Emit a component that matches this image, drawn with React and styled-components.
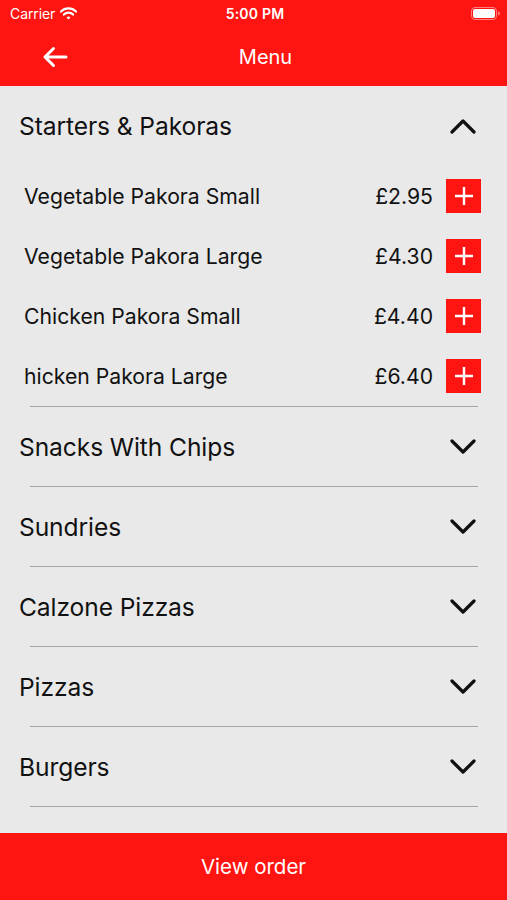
import React from 'react'
import styled, { createGlobalStyle } from 'styled-components'

const RED = '#fe1410'

const GlobalStyle = createGlobalStyle`
  html, body {
    margin: 0;
    padding: 0;
    background: #e9e9e9;
  }
  body {
    font-family: Inter, "Liberation Sans", Arial, sans-serif;
    -webkit-font-smoothing: antialiased;
  }
`

const Screen = styled.div`
  width: 507px;
  height: 900px;
  display: flex;
  flex-direction: column;
  background: #e9e9e9;
  overflow: hidden;
`

const Header = styled.header`
  background: ${RED};
  height: 86px;
  display: flex;
  flex-direction: column;
  color: #fff;
`

const StatusBar = styled.div`
  height: 27px;
  display: grid;
  grid-template-columns: 1fr auto 1fr;
  align-items: center;
  padding: 0 7px 0 10px;
  font-size: 14px;
`

const Carrier = styled.div`
  display: flex;
  align-items: center;
  gap: 5px;
  letter-spacing: -0.1px;
`

const Clock = styled.div`
  font-weight: 600;
  letter-spacing: 0.2px;
`

const Battery = styled.div`
  justify-self: end;
  display: flex;
  align-items: center;
`

const NavBar = styled.div`
  flex: 1;
  display: flex;
  align-items: center;
  position: relative;
  padding-left: 42px;
`

const BackButton = styled.button`
  border: 0;
  background: none;
  padding: 0;
  display: flex;
  cursor: pointer;
`

const NavTitle = styled.div`
  position: absolute;
  left: 0;
  right: 0;
  padding-left: 24px;
  text-align: center;
  font-size: 20px;
  pointer-events: none;
`

const Content = styled.main`
  flex: 1;
  overflow: hidden;
`

const Section = styled.section`
  display: flex;
  flex-direction: column;
`

const SectionHead = styled.div`
  height: ${(p) => (p.$open ? 80 : 79)}px;
  display: flex;
  align-items: center;
  justify-content: space-between;
  padding: 0 31px 0 19px;
  font-size: 24.6px;
  color: #111;
  letter-spacing: -0.1px;
`

const Divider = styled.hr`
  margin: 0 29px 0 30px;
  border: 0;
  height: 1px;
  background: #a6a6a6;
`

const ItemRow = styled.div`
  height: 60px;
  display: flex;
  align-items: center;
  padding: 0 26px 0 24px;
  font-size: 21.2px;
  color: #111;
`

const ItemName = styled.span`
  flex: 1;
`

const Price = styled.span`
  margin-right: 13px;
`

const AddButton = styled.button`
  width: 35px;
  height: 34px;
  border: 0;
  padding: 0;
  background: ${RED};
  display: flex;
  align-items: center;
  justify-content: center;
`

const Footer = styled.button`
  height: 67px;
  border: 0;
  background: ${RED};
  color: #fff;
  font-family: inherit;
  font-size: 20.5px;
  display: flex;
  align-items: center;
  justify-content: center;
`

const Chevron = ({ up }) => (
  <svg width="26" height="16" viewBox="0 0 26 16">
    <path
      d={up ? 'M2 14 L13 3 L24 14' : 'M2 2 L13 13 L24 2'}
      fill="none"
      stroke="#111"
      strokeWidth="3.2"
      strokeLinecap="round"
      strokeLinejoin="round"
    />
  </svg>
)

const Plus = () => (
  <svg width="20" height="20" viewBox="0 0 20 20">
    <path d="M10 1 V19 M1 10 H19" stroke="#fff" strokeWidth="2.4" />
  </svg>
)

const Wifi = () => (
  <svg width="17" height="13" viewBox="0 0 17 13">
    <path d="M1 4.6 A10.5 10.5 0 0 1 16 4.6" fill="none" stroke="#fff" strokeWidth="2.2" strokeLinecap="round" />
    <path d="M3.9 7.6 A6.3 6.3 0 0 1 13.1 7.6" fill="none" stroke="#fff" strokeWidth="2.2" strokeLinecap="round" />
    <path d="M6.5 10.4 L8.5 12.5 L10.5 10.4 A2.8 2.8 0 0 0 6.5 10.4 Z" fill="#fff" />
  </svg>
)

const BatteryIcon = () => (
  <svg width="29" height="13" viewBox="0 0 29 13">
    <rect x="0.5" y="0.5" width="25" height="12" rx="3.5" fill="none" stroke="rgba(255,255,255,0.45)" />
    <rect x="2" y="2" width="22" height="9" rx="2" fill="#fff" />
    <path d="M27 4.5 a1.8 1.8 0 0 1 0 4 z" fill="rgba(255,255,255,0.45)" />
  </svg>
)

const BackArrow = () => (
  <svg width="26" height="22" viewBox="0 0 26 22">
    <path d="M24 11 H3 M11.5 2.5 L3 11 L11.5 19.5" fill="none" stroke="#fff" strokeWidth="3" strokeLinecap="round" strokeLinejoin="round" />
  </svg>
)

const starters = [
  { name: 'Vegetable Pakora Small', price: '£2.95' },
  { name: 'Vegetable Pakora Large', price: '£4.30' },
  { name: 'Chicken Pakora Small', price: '£4.40' },
  { name: 'hicken Pakora Large', price: '£6.40' },
]

const collapsed = ['Snacks With Chips', 'Sundries', 'Calzone Pizzas', 'Pizzas', 'Burgers']

export default function App() {
  return (
    <Screen>
      <GlobalStyle />
      <Header>
        <StatusBar>
          <Carrier>
            Carrier <Wifi />
          </Carrier>
          <Clock>5:00 PM</Clock>
          <Battery>
            <BatteryIcon />
          </Battery>
        </StatusBar>
        <NavBar>
          <BackButton aria-label="Back">
            <BackArrow />
          </BackButton>
          <NavTitle>Menu</NavTitle>
        </NavBar>
      </Header>

      <Content>
        <Section>
          <SectionHead $open>
            Starters &amp; Pakoras
            <Chevron up />
          </SectionHead>
          {starters.map((item) => (
            <ItemRow key={item.name}>
              <ItemName>{item.name}</ItemName>
              <Price>{item.price}</Price>
              <AddButton aria-label="Add">
                <Plus />
              </AddButton>
            </ItemRow>
          ))}
          <Divider />
        </Section>
        {collapsed.map((title) => (
          <Section key={title}>
            <SectionHead>
              {title}
              <Chevron />
            </SectionHead>
            <Divider />
          </Section>
        ))}
      </Content>

      <Footer>View order</Footer>
    </Screen>
  )
}
